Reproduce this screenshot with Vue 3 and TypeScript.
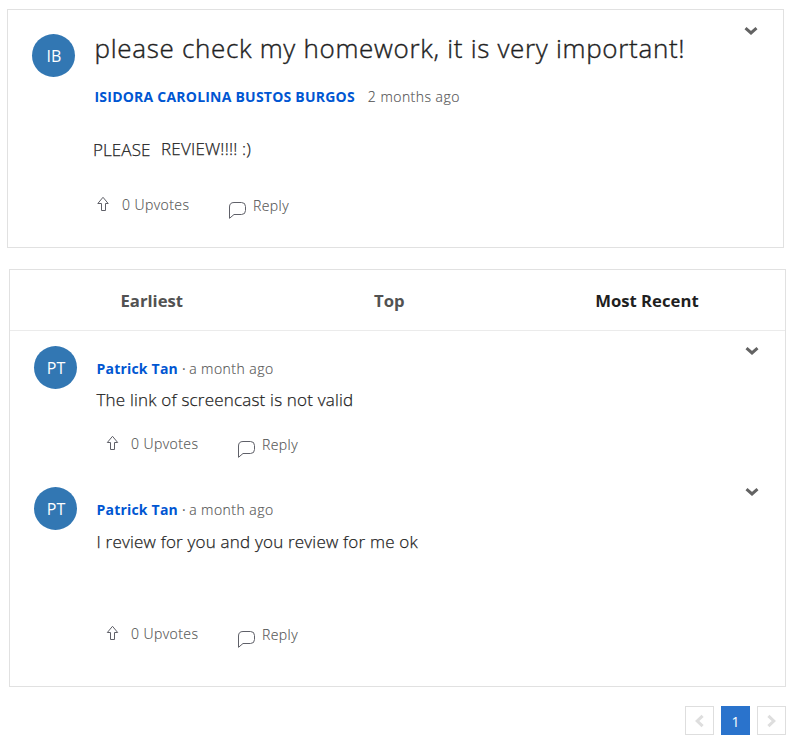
<script setup lang="ts">
interface Comment {
  id: number
  initials: string
  author: string
  age: string
  body: string
  upvotes: number
}

const comments: Comment[] = [
  { id: 1, initials: 'PT', author: 'Patrick Tan', age: 'a month ago', body: 'The link of screencast is not valid', upvotes: 0 },
  { id: 2, initials: 'PT', author: 'Patrick Tan', age: 'a month ago', body: 'I review for you and you review for me ok', upvotes: 0 },
]
const tabs: string[] = ['Earliest', 'Top', 'Most Recent']
const activeTab = 'Most Recent'
</script>

<template>
  <main class="page">
    <article class="card post">
      <div class="avatar">IB</div>
      <div class="content">
        <h1 class="title"><span>please check my homework, it is very important!</span></h1>
        <div class="meta"><a class="author upper">ISIDORA CAROLINA BUSTOS BURGOS</a><span class="age">2 months ago</span></div>
        <p class="body"><span class="first">PLEASE</span><span class="second">REVIEW!!!! :)</span></p>
        <div class="actions">
          <svg class="up" width="13" height="16" viewBox="0 0 13 16"><path d="M6 1.3 L11.2 7.5 H8.5 V14.5 H4.5 V7.5 H.8 Z" /></svg>
          <span class="votes">0 Upvotes</span>
          <svg class="bubble" width="18" height="18" viewBox="0 0 18 18"><path d="M.5 16.3 V5 Q.5 .5 5 .5 H12.5 Q16.5 .5 16.5 4.5 V8.5 Q16.5 12.5 12.5 12.5 H5 Z" /></svg>
          <span class="reply">Reply</span>
        </div>
      </div>
      <svg class="chevron" width="14" height="10" viewBox="0 0 14 10"><path d="M1.5 2.2 L7 7 L12.5 2.2" /></svg>
    </article>

    <section class="card thread">
      <nav class="tabs">
        <a v-for="tab in tabs" :key="tab" class="tab" :class="{ active: tab === activeTab }">{{ tab }}</a>
      </nav>
      <article v-for="c in comments" :key="c.id" class="comment">
        <div class="avatar">{{ c.initials }}</div>
        <div class="content">
          <div class="meta"><a class="author">{{ c.author }}</a><span class="dot">·</span><span class="age">{{ c.age }}</span></div>
          <p class="body"><span>{{ c.body }}</span></p>
          <div class="actions">
            <svg class="up" width="13" height="16" viewBox="0 0 13 16"><path d="M6.5 1.3 L11.7 7.5 H8.5 V14.5 H4.5 V7.5 H1.3 Z" /></svg>
            <span class="votes">{{ c.upvotes }} Upvotes</span>
            <svg class="bubble" width="18" height="18" viewBox="0 0 18 18"><path d="M.5 16.3 V5 Q.5 .5 5 .5 H12.5 Q16.5 .5 16.5 4.5 V8.5 Q16.5 12.5 12.5 12.5 H5 Z" /></svg>
            <span class="reply">Reply</span>
          </div>
        </div>
        <svg class="chevron" width="14" height="10" viewBox="0 0 14 10"><path d="M1.5 2.2 L7 7 L12.5 2.2" /></svg>
      </article>
    </section>

    <nav class="pager">
      <a class="page-btn"><svg width="11" height="14" viewBox="0 0 11 14"><path d="M8.6 1.8 L3.2 7 L8.6 12.2" /></svg></a>
      <a class="page-btn current">1</a>
      <a class="page-btn"><svg width="11" height="14" viewBox="0 0 11 14"><path d="M2.4 1.8 L7.8 7 L2.4 12.2" /></svg></a>
    </nav>
  </main>
</template>

<style>
body { margin: 0; background: #fff; }
</style>

<style scoped>
* { box-sizing: border-box; }
.page {
  width: 811px;
  height: 752px;
  padding: 9px 0 0 7px;
  overflow: hidden;
  font-family: "Open Sans", sans-serif;
  color: #1f1f1f;
}
.card { width: 777px; border: 1px solid #e1e1e1; }
.post { display: flex; height: 239px; padding-left: 24px; }
.avatar {
  flex: none;
  width: 43px;
  height: 43px;
  margin-top: 24px;
  border-radius: 50%;
  background: #3277b3;
  color: #fff;
  font-size: 16px;
  line-height: 44px;
  text-indent: 1px;
  text-align: center;
}
.content { flex: none; width: 660px; margin-left: 20px; white-space: nowrap; }
.title { margin: 18px 0 0 -0.5px; font-size: 26px; line-height: 40px; font-weight: 300; letter-spacing: 0.69px; -webkit-text-stroke: 0.4px currentColor; }
.meta { display: flex; font-size: 14px; line-height: 20px; }
.post .meta { margin-top: 19px; }
.author { color: #0056d2; font-weight: 700; letter-spacing: 0.15px; }
.upper { margin-left: -0.5px; letter-spacing: 0.22px; }
.age { color: #555; font-weight: 300; letter-spacing: 0.46px; -webkit-text-stroke: 0.15px currentColor; }
.post .age { margin-left: 13px; }
.dot { margin: 0 3.5px 0 4px; color: #575757; }
.body { display: flex; margin: 31px 0 0 -2px; font-size: 17px; line-height: 24px; font-weight: 300; letter-spacing: 0.2px; -webkit-text-stroke: 0.25px currentColor; }
.first { letter-spacing: 0.1px; }
.second { margin: -1px 0 1px 10.5px; }
.actions { display: flex; height: 20px; margin-top: 33px; padding-left: 2px; font-size: 14px; line-height: 20px; font-weight: 300; letter-spacing: 0.42px; color: #555; -webkit-text-stroke: 0.15px currentColor; }
.actions svg { flex: none; fill: none; stroke: #5f6068; stroke-width: 1; }
.up { margin-top: 1px; }
.votes { width: 107px; margin-left: 12px; }
.bubble { margin-top: 7px; }
.reply { margin: 1px 0 -1px 6px; }
.chevron { flex: none; margin: 16px 0 0 -11px; fill: none; stroke: #636363; stroke-width: 3; }

.thread { height: 418px; margin: 21px 0 0 2px; }
.tabs { display: flex; gap: 191px; height: 61px; padding-left: 110.5px; border-bottom: 1px solid #ebebeb; font-size: 16.7px; line-height: 62px; font-weight: 700; white-space: nowrap; }
.tab { color: #525252; }
.tab.active { margin-left: -0.5px; color: #1f1f1f; }
.comment { display: flex; height: 141px; padding-left: 24px; }
.comment .avatar { margin-top: 15px; }
.comment .chevron { margin: 15px 0 0 -12px; }
.comment .meta { margin-top: 28px; }
.comment .author { margin-left: -0.5px; letter-spacing: 0.2px; }
.comment .body { margin: 9px 0 0 -0.5px; }
.comment .actions { margin-top: 22px; padding-left: 9px; }
.comment:last-child .body { margin-top: 10px; }
.comment:last-child .actions { margin-top: 70px; }

.pager { display: flex; gap: 7px; margin: 19px 0 0 678px; }
.page-btn { display: flex; align-items: center; justify-content: center; width: 29px; height: 29px; border: 1px solid #dedede; }
.page-btn svg { fill: none; stroke: #dedede; stroke-width: 3; }
.current { border-color: #2a73cc; background: #2a73cc; color: #fff; font-size: 14px; padding-top: 2px; }
</style>
